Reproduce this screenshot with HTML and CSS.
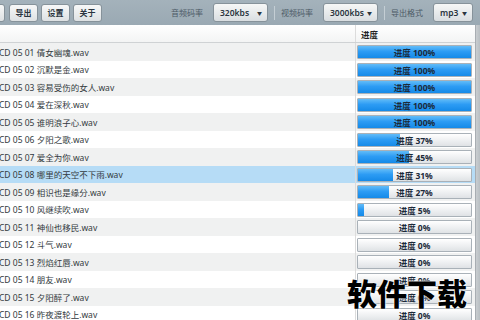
FILE: index.html
```html
<!DOCTYPE html>
<html lang="zh-CN">
<head>
<meta charset="utf-8">
<link rel="stylesheet" href="styles.css">
</head>
<body>
<div class="app">
  <div class="toolbar">
    <div class="btn btn-cut"></div>
    <div class="btn">导出</div>
    <div class="btn">设置</div>
    <div class="btn">关于</div>
    <div class="spacer"></div>
    <span class="label">音频码率</span>
    <div class="select s1"><span>320kbs</span><span class="arrow">▼</span></div>
    <span class="sep"></span>
    <span class="label">视频码率</span>
    <div class="select s2"><span>3000kbs</span><span class="arrow">▼</span></div>
    <span class="sep"></span>
    <span class="label">导出格式</span>
    <div class="select s3"><span>mp3</span><span class="arrow">▼</span></div>
  </div>
  <div class="content">
    <div class="table">
      <div class="row head"><div class="name"></div><div class="prog">进度</div></div>
      <div class="row odd"><div class="name">CD 05 01 倩女幽魂.wav</div><div class="prog"><div class="bar"><div class="fill" style="width:100%"></div><span>进度 100%</span></div></div></div>
      <div class="row"><div class="name">CD 05 02 沉默是金.wav</div><div class="prog"><div class="bar"><div class="fill" style="width:100%"></div><span>进度 100%</span></div></div></div>
      <div class="row odd"><div class="name">CD 05 03 容易受伤的女人.wav</div><div class="prog"><div class="bar"><div class="fill" style="width:100%"></div><span>进度 100%</span></div></div></div>
      <div class="row"><div class="name">CD 05 04 爱在深秋.wav</div><div class="prog"><div class="bar"><div class="fill" style="width:100%"></div><span>进度 100%</span></div></div></div>
      <div class="row odd"><div class="name">CD 05 05 谁明浪子心.wav</div><div class="prog"><div class="bar"><div class="fill" style="width:100%"></div><span>进度 100%</span></div></div></div>
      <div class="row"><div class="name">CD 05 06 夕阳之歌.wav</div><div class="prog"><div class="bar"><div class="fill" style="width:37%"></div><span>进度 37%</span></div></div></div>
      <div class="row odd"><div class="name">CD 05 07 爱全为你.wav</div><div class="prog"><div class="bar"><div class="fill" style="width:45%"></div><span>进度 45%</span></div></div></div>
      <div class="row sel"><div class="name">CD 05 08 哪里的天空不下雨.wav</div><div class="prog"><div class="bar"><div class="fill" style="width:31%"></div><span>进度 31%</span></div></div></div>
      <div class="row odd"><div class="name">CD 05 09 相识也是缘分.wav</div><div class="prog"><div class="bar"><div class="fill" style="width:27%"></div><span>进度 27%</span></div></div></div>
      <div class="row"><div class="name">CD 05 10 风继续吹.wav</div><div class="prog"><div class="bar"><div class="fill" style="width:5%"></div><span>进度 5%</span></div></div></div>
      <div class="row odd"><div class="name">CD 05 11 神仙也移民.wav</div><div class="prog"><div class="bar"><span>进度 0%</span></div></div></div>
      <div class="row"><div class="name">CD 05 12 斗气.wav</div><div class="prog"><div class="bar"><span>进度 0%</span></div></div></div>
      <div class="row odd"><div class="name">CD 05 13 烈焰红唇.wav</div><div class="prog"><div class="bar"><span>进度 0%</span></div></div></div>
      <div class="row"><div class="name">CD 05 14 朋友.wav</div><div class="prog"><div class="bar"><span>进度 0%</span></div></div></div>
      <div class="row odd"><div class="name">CD 05 15 夕阳醉了.wav</div><div class="prog"><div class="bar"><span>进度 0%</span></div></div></div>
      <div class="row"><div class="name">CD 05 16 昨夜渡轮上.wav</div><div class="prog"><div class="bar"><span>进度 0%</span></div></div></div>
    </div>
    <div class="scroll"></div>
  </div>
  <div class="watermark">软件下载</div>
</div>
</body>
</html>
```
FILE: styles.css
```css
* { box-sizing: border-box; }
html, body { margin: 0; padding: 0; }
body {
  width: 480px; height: 320px; overflow: hidden;
  font-family: "Noto Sans", "Noto Sans CJK SC", sans-serif;
  background: #fff;
}
.app { position: relative; width: 480px; height: 320px; overflow: hidden; display: flex; flex-direction: column; }
.toolbar {
  height: 25px; flex: none;
  background: linear-gradient(#a4b2bb, #9aa9b3);
  display: flex; align-items: center;
  padding-right: 7px;
}
.btn {
  width: 29px; height: 18px; margin-left: 3px;
  display: flex; align-items: center; justify-content: center;
  font-size: 8px; font-weight: bold; color: #2a3540;
  background: linear-gradient(#f7f8f8, #dde1e3);
  border: 1px solid #86929a; border-radius: 3px;
  font-family: "Noto Sans CJK SC", sans-serif;
}
.btn-cut { margin-left: -24px; }
.btn-cut + .btn { margin-left: 4px; }
.spacer { flex: 1; }
.label { font-size: 8px; color: #4c5a66; font-family: "Noto Sans CJK SC", sans-serif; margin-right: 10px; }
.select {
  height: 19px; display: flex; align-items: center; justify-content: space-between;
  padding: 0 5px 0 6px;
  font-size: 8.5px; font-weight: 600; color: #2a3540;
  background: linear-gradient(#f6f7f7, #d9dee1);
  border: 1px solid #86929a; border-radius: 3px;
}
.select .arrow { font-size: 5px; color: #2a3540; }
.s1 { width: 55px; }
.s2 { width: 55px; }
.s3 { width: 40px; }
.sep { width: 1px; height: 14px; background: #c4ced4; margin: 0 6px 0 6px; }
.content { flex: 1; display: flex; }
.table { width: 475px; display: flex; flex-direction: column; }
.row { display: flex; height: 17.5px; flex: none; }
.row.odd { background: #f0f1f1; }
.row.sel { background: #b6dcf6; }
.row.head {
  height: 18px;
  background: linear-gradient(#ffffff, #f3f4f4);
  border-bottom: 1px solid #cfd2d4;
}
.name {
  width: 356px; font-size: 8.5px; color: #333a40;
  display: flex; align-items: center; margin-left: -1px; white-space: nowrap;
}
.prog {
  flex: 1; border-left: 1px solid #dcdcdc;
  padding: 2px 3px 1.5px 1px;
  display: flex; align-items: stretch;
}
.head .prog {
  align-items: center; padding-left: 5px;
  font-size: 8.5px; font-weight: bold; color: #222;
  font-family: "Noto Sans CJK SC", sans-serif;
}
.bar {
  position: relative; flex: 1;
  border: 1px solid #a9b1b8; border-radius: 1px;
  background: linear-gradient(#ffffff, #eceef0 60%, #dfe2e5);
  overflow: hidden;
  display: flex; align-items: center; justify-content: center;
}
.fill {
  position: absolute; left: 0; top: 0; bottom: 0;
  background: linear-gradient(#62bcf8, #2d9cf4 45%, #158ae8);
}
.bar span {
  position: relative; font-size: 8.5px; font-weight: bold; color: #1c2a3a;
}
.scroll { flex: 1; background: linear-gradient(90deg, #c9cdd0, #b8bec2); border-left: 1px solid #a8adb2; }
.watermark {
  position: absolute; left: 347px; top: 274px;
  font-family: "Noto Sans CJK SC", sans-serif; font-weight: 900;
  font-size: 30px; line-height: 36px; color: #000; letter-spacing: 0;
  text-shadow: 0 0 2px #fff, 0 0 2px #fff;
}
```
